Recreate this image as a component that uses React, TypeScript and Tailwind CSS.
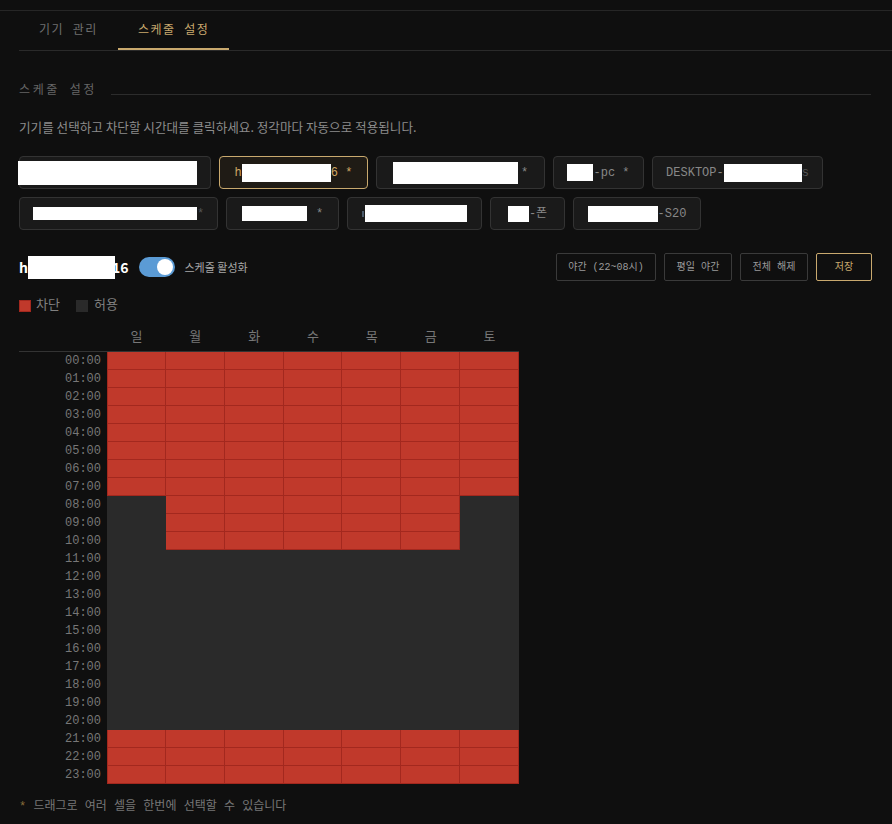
import { useState } from "react";

const DAYS = ["일", "월", "화", "수", "목", "금", "토"];
const HOURS = Array.from({ length: 24 }, (_, i) => i);

const mono = "font-['Liberation_Mono','Noto_Sans_CJK_KR',monospace]";
const sans = "font-['Noto_Sans_CJK_KR','Noto_Sans',sans-serif]";

// redacted device names are shown as white blocks, same as the capture
function Redact({ w, h }: { w: number; h: number }) {
  return <span className="relative z-10 inline-block bg-white shrink-0" style={{ width: w, height: h }} />;
}

interface Device {
  id: string;
  width: number;
  active?: boolean;
  start?: boolean;
  content: React.ReactNode;
}

const devices: Device[] = [
  { id: "a", width: 192, start: true, content: <span className="-ml-[2px] flex"><Redact w={179} h={24} /></span> },
  {
    id: "b",
    width: 149,
    active: true,
    content: (
      <>
        <span>h</span>
        <Redact w={89} h={18} />
        <span>6 *</span>
      </>
    ),
  },
  {
    id: "c",
    width: 169,
    content: (
      <>
        <Redact w={125} h={22} />
        <span className="ml-[3px]">*</span>
      </>
    ),
  },
  {
    id: "d",
    width: 91,
    content: (
      <>
        <Redact w={26} h={17} />
        <span>-pc *</span>
      </>
    ),
  },
  {
    id: "e",
    width: 171,
    content: (
      <>
        <span>DESKTOP-</span>
        <Redact w={78} h={18} />
        <span className="text-[#555]">s</span>
      </>
    ),
  },
  {
    id: "f",
    width: 199,
    content: (
      <>
        <Redact w={164} h={13} />
        <span className="text-[#555]">*</span>
      </>
    ),
  },
  {
    id: "g",
    width: 113,
    content: (
      <>
        <Redact w={65} h={15} />
        <span className="ml-[9px]">*</span>
      </>
    ),
  },
  {
    id: "h",
    width: 135,
    content: (
      <>
        <span className="w-[2px] h-[6px] bg-[#4a5a6a] mr-px" />
        <Redact w={102} h={17} />
      </>
    ),
  },
  {
    id: "i",
    width: 75,
    content: (
      <>
        <Redact w={21} h={16} />
        <span>-폰</span>
      </>
    ),
  },
  {
    id: "j",
    width: 128,
    content: (
      <>
        <Redact w={70} h={16} />
        <span>-S20</span>
      </>
    ),
  },
];

function isBlocked(day: number, hour: number) {
  if (hour < 8 || hour >= 21) return true;
  if (hour <= 10 && day >= 1 && day <= 5) return true;
  return false;
}

export default function App() {
  const [enabled] = useState(true);

  return (
    <div className={`min-h-screen bg-[#0f0f0f] ${sans}`}>
      <div className="h-[11px] border-b border-[#262626]" />

      {/* Tabs */}
      <div className={`ml-[19px] flex border-b border-[#2a2a2a] ${mono}`}>
        <button className="h-[39px] px-5 text-[12px] tracking-[1.5px] text-[#6f6f6f]">기기 관리</button>
        <button className="h-[39px] px-5 text-[12px] tracking-[1.5px] text-[#c9a96e] border-b-2 border-[#c9a96e] pt-[2px]">
          스케줄 설정
        </button>
      </div>

      <div className="pl-[19px] pr-[21px]">
        {/* Section title */}
        <div className="mt-[32px] flex items-center gap-[14px]">
          <span className={`text-[12px] leading-4 tracking-[2.6px] text-[#666] ${mono}`}>스케줄 설정</span>
          <div className="flex-1 h-px bg-[#2c2c2c] mt-[6px]" />
        </div>

        <p className="mt-[19px] text-[12.6px] leading-[18px] text-[#8c8c8c]">
          기기를 선택하고 차단할 시간대를 클릭하세요. 정각마다 자동으로 적용됩니다.
        </p>

        {/* Device chips */}
        <div className={`mt-[20px] flex flex-wrap gap-2 ${mono}`}>
          {devices.map((d) => (
            <div
              key={d.id}
              style={{ width: d.width }}
              className={`h-[33px] rounded-[4px] border flex items-center text-[12px] ${
                d.start ? "justify-start" : "justify-center"
              } ${
                d.active
                  ? "border-[#c9a96e] bg-[#1f1b15] text-[#d0a865]"
                  : "border-[#333] bg-[#1a1a1a] text-[#888]"
              }`}
            >
              {d.content}
            </div>
          ))}
        </div>

        {/* Device header */}
        <div className="mt-[23px] flex items-center justify-between mr-[-1px]">
          <div className="flex items-center">
            <span className="text-[14px] font-bold text-white flex items-center">
              h<Redact w={87} h={23} />
              <span className="-ml-[3px]">16</span>
            </span>
            <div
              className={`ml-[10px] w-[36px] h-[20px] rounded-full p-[2px] flex ${
                enabled ? "bg-[#5b9bd5] justify-end" : "bg-[#444] justify-start"
              }`}
            >
              <div className="w-[16px] h-[16px] rounded-full bg-white" />
            </div>
            <span className="ml-[10px] text-[11px] text-[#a8a8a8]">스케줄 활성화</span>
          </div>
          <div className={`flex gap-2 text-[10px] ${mono}`}>
            <button className="w-[100px] h-[28px] border border-[#3a3a3a] rounded-[2px] text-[#9a9a9a]">
              야간 (22~08시)
            </button>
            <button className="w-[68px] h-[28px] border border-[#3a3a3a] rounded-[2px] text-[#9a9a9a]">
              평일 야간
            </button>
            <button className="w-[68px] h-[28px] border border-[#3a3a3a] rounded-[2px] text-[#9a9a9a]">
              전체 해제
            </button>
            <button className="w-[56px] h-[28px] border border-[#c9a96e] rounded-[2px] text-[#c9a96e]">
              저장
            </button>
          </div>
        </div>

        {/* Legend */}
        <div className={`mt-[18px] flex items-center text-[13px] leading-[14px] text-[#808080] ${mono}`}>
          <span className="w-[12px] h-[12px] bg-[#c0392b] border border-[#a3281e]" />
          <span className="ml-[5px]">차단</span>
          <span className="ml-[16px] w-[12px] h-[12px] bg-[#2a2a2a]" />
          <span className="ml-[6px]">허용</span>
        </div>

        {/* Schedule grid */}
        <div className={`mt-[9px] w-[500px] ${mono}`}>
          <div className="grid grid-cols-[88px_repeat(7,1fr)] h-[30px] border-b border-[#333]">
            <div />
            {DAYS.map((d) => (
              <div key={d} className="flex items-center justify-center pt-[3px] text-[13px] text-[#777]">
                {d}
              </div>
            ))}
          </div>
          <div className="grid grid-cols-[88px_repeat(7,1fr)]">
            {HOURS.map((h) => (
              <div key={h} className="contents">
                <div className="h-[18px] pr-[6px] text-right text-[12px] leading-[18px] text-[#777]">
                  {String(h).padStart(2, "0")}:00
                </div>
                {DAYS.map((_, d) => (
                  <div
                    key={d}
                    className={`h-[18px] border-r border-b ${d === 0 ? "border-l" : ""} ${
                      isBlocked(d, h)
                        ? "bg-[#c0392b] border-[#a3281e]"
                        : "bg-[#2a2a2a] border-[#2a2a2a]"
                    }`}
                  />
                ))}
              </div>
            ))}
          </div>
        </div>

        <p className={`mt-[15px] text-[12px] leading-4 text-[#777] ${mono}`}>
          <span className="text-[#8a6d3b]">*</span> 드래그로 여러 셀을 한번에 선택할 수 있습니다
        </p>
      </div>
    </div>
  );
}
